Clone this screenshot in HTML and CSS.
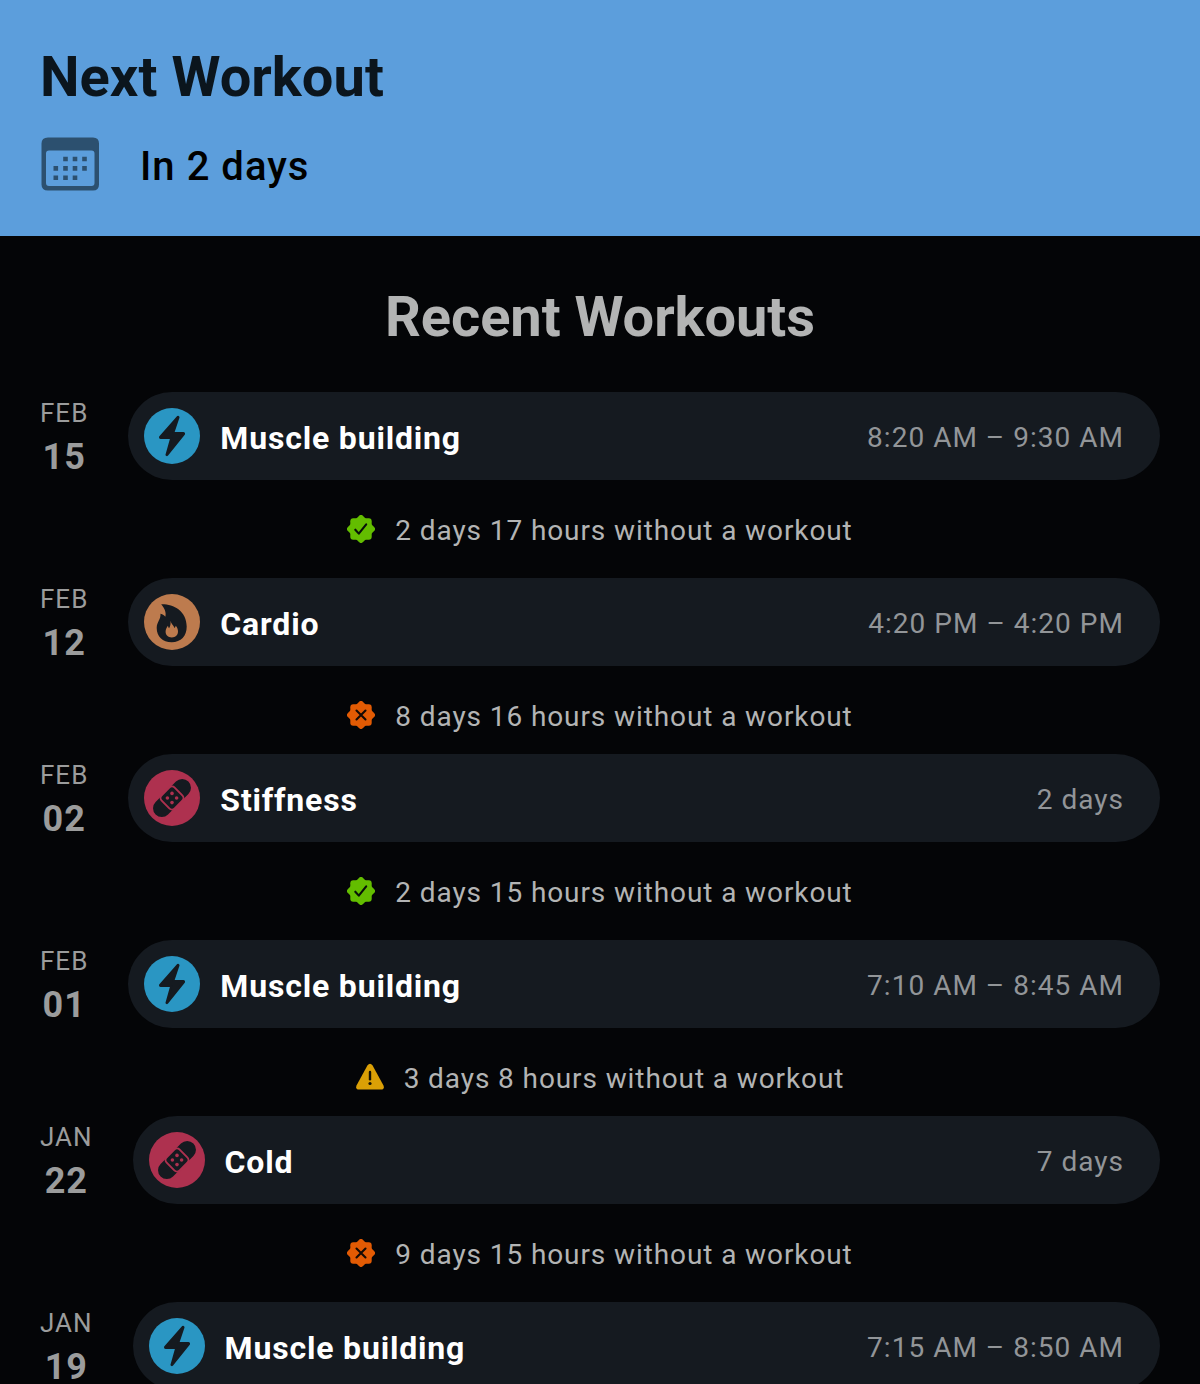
FILE: index.html
```
<!DOCTYPE html>
<html lang="en">
<head>
<meta charset="utf-8">
<title>Workouts</title>
<link rel="stylesheet" href="styles.css">
</head>
<body>
<svg class="sprite" aria-hidden="true">
  <symbol id="bolt" viewBox="0 0 56 56">
    <circle cx="28" cy="28" r="28" fill="#2a96c3"/>
    <path d="M33.8 9 16.2 28.9q-.3 1 .6 1.1H27.3L22.6 46.7q.1.6.6.1L39.9 26q.2-.9-.6-1H29.2L34.4 9.300Q34.300 8.700 33.800 9Z" fill="#151a20" stroke="#151a20" stroke-width="2.200" stroke-linejoin="round"/>
  </symbol>
  <symbol id="flame" viewBox="0 0 56 56">
    <circle cx="28" cy="28" r="28" fill="#bd7b4e"/>
    <path d="M17.200 10.200C29 9.800 42.700 16.500 42.700 32.500C42.700 42 37 48.200 27.700 48.200C18.500 48.200 12.700 42.500 12.700 34C12.700 28 16.800 25.800 16.500 19.800C18.800 20.300 20.400 21.300 21.300 22.800C22.600 18.500 20.400 14 17.200 10.200Z" fill="#151a20"/>
    <path d="M26.500 26.800C27 30 29.500 31 30.500 34C31.200 33.500 31.600 32.800 31.700 31.700C33.300 33.300 34 35.300 34 37.500C34 41.200 31.500 43.400 27.800 43.400C24 43.400 21.600 41 21.600 37.800C21.600 35.500 22.700 33.500 24 31.800C24.200 33 24.500 33.700 25.100 34.300C26.500 32 26.800 29.500 26.500 26.800Z" fill="#bd7b4e"/>
  </symbol>
  <symbol id="bandage" viewBox="0 0 56 56">
    <circle cx="28" cy="28" r="28" fill="#ae314f"/>
    <g transform="rotate(-45 28 28)">
      <rect x="4.800" y="19.200" width="46.400" height="17.600" rx="8.800" fill="#151a20"/>
      <rect x="18.800" y="18.800" width="18.400" height="18.400" rx="3.800" fill="#151a20" stroke="#ae314f" stroke-width="1.900"/>
    </g>
    <g fill="#ae314f"><circle cx="28" cy="23.400" r="1.800"/><circle cx="23.400" cy="28" r="1.800"/><circle cx="32.600" cy="28" r="1.800"/><circle cx="28" cy="32.600" r="1.800"/></g>
  </symbol>
  <symbol id="seal" viewBox="0 0 28 28">
    <rect x="3.300" y="3.300" width="21.400" height="21.400" rx="2.900"/>
    <rect x="3.300" y="3.300" width="21.400" height="21.400" rx="2.900" transform="rotate(45 14 14)"/>
  </symbol>
  <symbol id="ok" viewBox="0 0 28 28">
    <use href="#seal" fill="#63bd00"/>
    <path d="M8.300 14.700 11.800 18.600 19.200 9.300" fill="none" stroke="#08100a" stroke-width="2.100" stroke-linecap="round" stroke-linejoin="round"/>
  </symbol>
  <symbol id="bad" viewBox="0 0 28 28">
    <use href="#seal" fill="#e25b04"/>
    <path d="m9.500 9.500 9 9m0-9-9 9" fill="none" stroke="#140a05" stroke-width="2.100" stroke-linecap="round"/>
  </symbol>
  <symbol id="warn" viewBox="0 0 28 28">
    <path d="M11.400 2.600Q14-1.200 16.600 2.600L27.500 22.500Q28.800 26.600 25 26.600H3Q-.8 26.600 .5 22.500Z" fill="#dba006"/>
    <path d="M14 9v7.300" stroke="#171203" stroke-width="2.400" stroke-linecap="round"/>
    <circle cx="14" cy="20.500" r="1.600" fill="#171203"/>
  </symbol>
</svg>

<header class="next">
  <h1 class="next-title">Next Workout</h1>
  <div class="next-row">
    <svg class="calendar" viewBox="0 0 60 60">
      <path fill-rule="evenodd" d="M8 3.500H53Q59 3.500 59 9.500V50.500Q59 56.500 53 56.500H8Q1.500 56.500 1.500 50.500V9.500Q1.500 3.500 8 3.500ZM9 16.600Q6 16.600 6 19.600V49Q6 52 9 52H51.500Q54.500 52 54.500 49V19.600Q54.500 16.600 51.500 16.600Z"/>
      <path d="M25.500 22.700v4.600M35 22.700v4.600M44.500 22.700v4.600M15.800 32.100v4.600M25.500 32.100v4.600M35 32.100v4.600M44.500 32.100v4.600M15.800 41.500v4.600M25.500 41.500v4.600M35 41.500v4.600" stroke="#2c506f" stroke-width="4.600"/>
    </svg>
    <span class="next-when">In 2 days</span>
  </div>
</header>

<main class="recent">
  <h2 class="recent-title">Recent Workouts</h2>

  <section class="entry">
    <div class="date"><span class="month">FEB</span><span class="day">15</span></div>
    <div class="pill"><svg class="kind"><use href="#bolt"/></svg><span class="name">Muscle building</span><span class="time">8:20 AM – 9:30 AM</span></div>
  </section>
  <p class="pause"><svg class="status"><use href="#ok"/></svg><span>2 days 17 hours without a workout</span></p>

  <section class="entry">
    <div class="date"><span class="month">FEB</span><span class="day">12</span></div>
    <div class="pill"><svg class="kind"><use href="#flame"/></svg><span class="name">Cardio</span><span class="time">4:20 PM – 4:20 PM</span></div>
  </section>
  <p class="pause tight"><svg class="status"><use href="#bad"/></svg><span>8 days 16 hours without a workout</span></p>

  <section class="entry">
    <div class="date"><span class="month">FEB</span><span class="day">02</span></div>
    <div class="pill"><svg class="kind"><use href="#bandage"/></svg><span class="name">Stiffness</span><span class="time">2 days</span></div>
  </section>
  <p class="pause"><svg class="status"><use href="#ok"/></svg><span>2 days 15 hours without a workout</span></p>

  <section class="entry">
    <div class="date"><span class="month">FEB</span><span class="day">01</span></div>
    <div class="pill"><svg class="kind"><use href="#bolt"/></svg><span class="name">Muscle building</span><span class="time">7:10 AM – 8:45 AM</span></div>
  </section>
  <p class="pause tight"><svg class="status"><use href="#warn"/></svg><span>3 days 8 hours without a workout</span></p>

  <section class="entry">
    <div class="date"><span class="month">JAN</span><span class="day">22</span></div>
    <div class="pill"><svg class="kind"><use href="#bandage"/></svg><span class="name">Cold</span><span class="time">7 days</span></div>
  </section>
  <p class="pause"><svg class="status"><use href="#bad"/></svg><span>9 days 15 hours without a workout</span></p>

  <section class="entry">
    <div class="date"><span class="month">JAN</span><span class="day">19</span></div>
    <div class="pill"><svg class="kind"><use href="#bolt"/></svg><span class="name">Muscle building</span><span class="time">7:15 AM – 8:50 AM</span></div>
  </section>
</main>
</body>
</html>
```
FILE: styles.css
```
* { box-sizing: border-box; }
html { overflow: hidden; }
body {
  margin: 0;
  height: 1384px;
  overflow: hidden;
  background: #040507;
  font-family: Roboto, "Liberation Sans", sans-serif;
}
svg { display: block; flex: none; }
h1, h2, p { margin: 0; }
.sprite { display: none; }

.next {
  height: 236px;
  padding: 45px 40px 0;
  background: #5c9edc;
}
.next-title {
  font-size: 56px;
  line-height: 64px;
  font-weight: 700;
  letter-spacing: 0.06px;
  color: #0b151d;
}
.next-row {
  display: flex;
  align-items: flex-start;
  gap: 40px;
  margin-top: 25px;
}
.calendar { width: 60px; height: 60px; fill: #2c506f; }
.next-when {
  font-size: 40px;
  line-height: 60px;
  padding-top: 3px;
  font-weight: 500;
  letter-spacing: 1.03px;
  color: #000;
}

.recent { padding: 49px 40px 0; }
.recent-title {
  margin-bottom: 43px;
  font-size: 56px;
  line-height: 64px;
  font-weight: 700;
  letter-spacing: -0.05px;
  text-align: center;
  color: #b3b4b4;
}
.entry { display: flex; gap: 40px; height: 88px; }
.date {
  display: flex;
  flex-direction: column;
  align-items: center;
  color: #9b9c9c;
}
.month {
  font-size: 26px;
  line-height: 30px;
  margin-top: 6px;
  letter-spacing: 1px;
}
.day {
  font-size: 36px;
  line-height: 44px;
  margin-top: 7px;
  font-weight: 700;
  letter-spacing: 1px;
}
.pill {
  flex: 1;
  display: flex;
  align-items: center;
  padding: 0 36px 0 16px;
  border-radius: 44px;
  background: #151a20;
}
.kind { width: 56px; height: 56px; }
.name {
  flex: 1;
  margin-left: 20px;
  padding-top: 4px;
  font-size: 32px;
  font-weight: 700;
  letter-spacing: 0.82px;
  color: #fff;
}
.time {
  padding-top: 2px;
  font-size: 28px;
  letter-spacing: 1.02px;
  color: #929598;
}
.pause {
  display: flex;
  justify-content: center;
  align-items: center;
  gap: 20px;
  height: 98px;
  font-size: 28px;
  letter-spacing: 0.9px;
  color: #b3b4b4;
}
.pause span { padding-top: 2px; }
.tight { height: 88px; padding-top: 10px; }
.status { width: 28px; height: 28px; }
```
